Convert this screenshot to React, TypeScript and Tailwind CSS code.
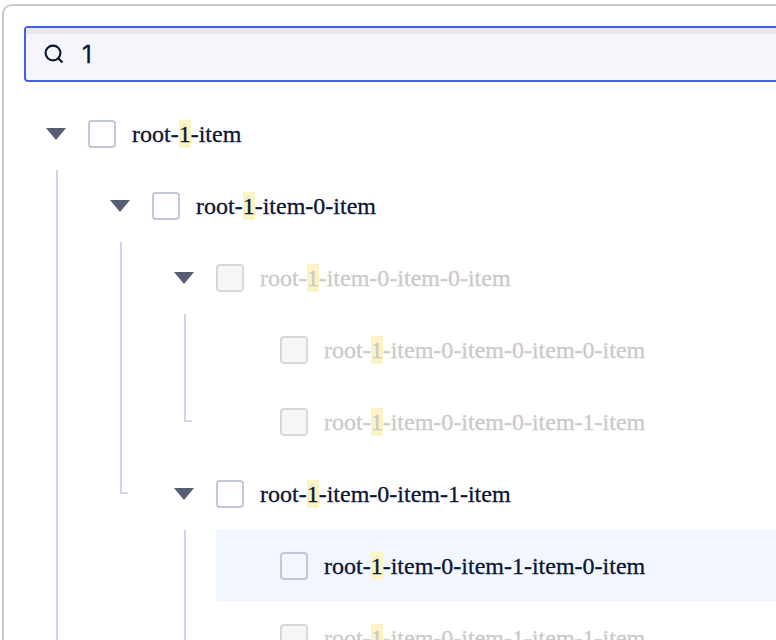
import type { ReactNode } from "react";

type ItemProps = {
  suffix: string;
  disabled?: boolean;
  active?: boolean;
  leaf?: boolean;
};

function Item({ suffix, disabled, active, leaf }: ItemProps) {
  return (
    <div className={`flex h-[72px] shrink-0 items-center ${active ? "bg-[#f2f6fe]" : ""}`}>
      <div className="flex w-16 shrink-0 justify-center">
        {!leaf && (
          <svg width="20" height="12" viewBox="0 0 20 12" className="block">
            <path d="M0 0H20L10 12Z" fill="#545f73" />
          </svg>
        )}
      </div>
      <span
        className={`size-7 shrink-0 rounded-[4px] border-2 ${
          disabled ? "border-[#d9d9d9] bg-[#f7f7f7]" : "border-[#c3c8d9]"
        }`}
      />
      <span
        className={`ml-4 text-2xl leading-7 whitespace-nowrap [-webkit-text-stroke:0.3px_currentColor] ${
          disabled ? "text-[#cacaca]" : "text-[#0a1633]"
        }`}
      >
        root-<mark className="inline-block h-7 bg-[#fdf4c4] text-inherit">1</mark>
        {suffix}
      </span>
    </div>
  );
}

function Branch({ guide, children }: { guide: string; children: ReactNode }) {
  return (
    <div className="flex">
      <div className="w-16 shrink-0">
        <div className={`ml-8 w-2 border-b-2 border-l-2 border-[#d2d5e8] ${guide}`} />
      </div>
      <div className="min-w-0 flex-1">{children}</div>
    </div>
  );
}

export default function App() {
  return (
    <div className="h-[640px] w-[776px] overflow-hidden bg-white pt-1 pl-0.5">
      <div className="h-[700px] w-[900px] rounded-[10px] border-2 border-[#cacaca] pt-5 pl-5">
        <div className="h-14 rounded-[4px] border-2 border-[#4062e8] bg-[#f6f5fb]">
          <div className="h-1.5 bg-[#e8e7ec]" />
          <div className="flex h-[40px] items-center pl-[18px]">
            <svg
              width="20"
              height="20"
              viewBox="0 0 20 20"
              fill="none"
              stroke="#0a1633"
              strokeWidth="2.1"
            >
              <circle cx="9" cy="9" r="7.4" />
              <path d="M14 14L18.5 18.5" />
            </svg>
            <span className="mt-0.5 ml-[18px] font-[Inter,sans-serif] text-2xl leading-7 text-[#0a1633] [-webkit-text-stroke:0.3px_currentColor]">1</span>
          </div>
        </div>
        <div className="pt-4 font-['Liberation_Serif',serif]">
          <Item suffix="-item" />
          <Branch guide="h-[600px]">
            <Item suffix="-item-0-item" />
            <Branch guide="h-[252px]">
              <Item suffix="-item-0-item-0-item" disabled />
              <Branch guide="h-[108px]">
                <Item suffix="-item-0-item-0-item-0-item" disabled leaf />
                <Item suffix="-item-0-item-0-item-1-item" disabled leaf />
              </Branch>
              <Item suffix="-item-0-item-1-item" />
              <Branch guide="h-[180px]">
                <Item suffix="-item-0-item-1-item-0-item" active leaf />
                <Item suffix="-item-0-item-1-item-1-item" disabled leaf />
              </Branch>
            </Branch>
          </Branch>
        </div>
      </div>
    </div>
  );
}
